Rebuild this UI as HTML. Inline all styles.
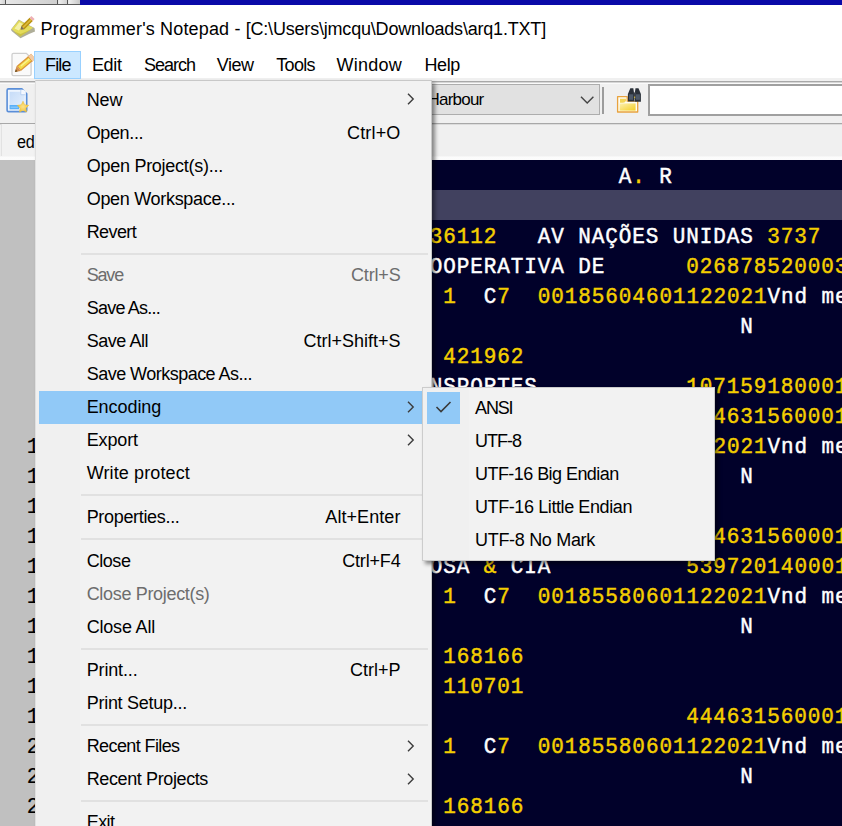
<!DOCTYPE html>
<html><head><meta charset="utf-8"><title>Programmer's Notepad</title>
<style>
html,body{margin:0;padding:0}
body{width:842px;height:826px;overflow:hidden;position:relative;background:#fff;font-family:"Liberation Sans",sans-serif}
.a{position:absolute}
.t{position:absolute;white-space:pre;line-height:1;font-family:"Liberation Sans",sans-serif}
.m{position:absolute;white-space:pre;font-family:"Liberation Mono",monospace;font-weight:normal;-webkit-text-stroke:0.45px;font-size:21px;line-height:30px;height:30px;color:#fff;letter-spacing:0.9px;transform:scaleY(1.07);transform-origin:0 20.6px}
.m i{font-style:normal;color:#f4cf00}
.ln{position:absolute;white-space:pre;font-family:"Liberation Mono",monospace;font-size:21px;line-height:30px;height:30px;color:#000;letter-spacing:0.9px;-webkit-text-stroke:0.15px;transform:scaleY(1.07);transform-origin:0 20.6px}
.sep{position:absolute;left:81px;width:347px;height:2px;background:#e1e1e1}
</style></head><body>

<div class="a" style="left:0;top:0;width:80px;height:4px;background:linear-gradient(90deg,#e9e9e9 0,#d2d2d2 5px,#e6e6e6 6px,#cfcfcf 57px,#ececec 59px,#d2d2d2 67px,#eeeeee 69px,#c8c8c8 80px)"></div>
<div class="a" style="left:5px;top:0;width:1px;height:4px;background:#555"></div>
<div class="a" style="left:57px;top:0;width:1px;height:4px;background:#555"></div>
<div class="a" style="left:67px;top:0;width:1px;height:4px;background:#555"></div>
<div class="a" style="left:0;top:4px;width:80px;height:1px;background:#5a5a5a"></div>
<div class="a" style="left:80px;top:0;width:762px;height:5px;background:#0a0aa8"></div>
<div class="a" style="left:0;top:78px;width:842px;height:82px;background:#f0f0f0"></div>
<div class="a" style="left:0;top:81px;width:842px;height:1px;background:#a8a8a8"></div>
<div class="a" style="left:0;top:82px;width:842px;height:1px;background:#d6d6d6"></div>
<div class="a" style="left:0;top:83px;width:842px;height:1px;background:#fafafa"></div>
<div class="a" style="left:0;top:123px;width:842px;height:1px;background:#a8a8a8"></div>
<div class="a" style="left:0;top:124px;width:842px;height:1px;background:#dcdcdc"></div>
<div class="a" style="left:300px;top:84px;width:300px;height:31px;background:#e1e1e1;border:1px solid #adadad;box-sizing:border-box"></div>
<div class="t" style="left:427.6px;top:91.4px;font-size:17px;color:#000;letter-spacing:-0.8px">Harbour</div>
<svg class="a" style="left:578px;top:93px" width="18" height="14" viewBox="0 0 18 14"><path d="M3 3.700 L9.200 10 L15.400 3.700" fill="none" stroke="#444" stroke-width="1.4"/></svg>
<div class="a" style="left:602px;top:87px;width:2px;height:27px;background:#9c9c9c"></div>
<svg class="a" style="left:612px;top:84px" width="34" height="34" viewBox="0 0 34 34">
<defs><linearGradient id="fg" x1="0" y1="0" x2="1" y2="1"><stop offset="0" stop-color="#fdf0b0"/><stop offset="1" stop-color="#f4cf25"/></linearGradient></defs>
<path d="M5.600 12.600 H15.200 V17.200 H25.700 V28 H5.600Z" fill="#fffdf2" stroke="#e8a23e" stroke-width="1.300" stroke-linejoin="round"/>
<path d="M8 14.800 h6 v2 q-.6 2 -3 2 h-3z" fill="#f3d456"/>
<rect x="7.600" y="19.400" width="16" height="7.200" fill="url(#fg)"/>
<path d="M18.300 4.200 h3 l.9 5.800 v7.500 h-6.300 v-7.500z" fill="#2a3039"/>
<path d="M23.500 4.200 h3 l2.400 5.800 v7.800 h-6.300 v-7.800z" fill="#2a3039"/>
<rect x="21.500" y="8.500" width="2.500" height="6" fill="#3a404a"/>
<rect x="17" y="10.300" width="4" height="5.500" fill="#70819a" opacity=".5"/>
<rect x="23.900" y="10.300" width="4" height="5.500" fill="#70819a" opacity=".5"/>
<rect x="22" y="12.500" width="1.200" height="1.800" fill="#c8b040"/>
</svg>
<div class="a" style="left:648px;top:84px;width:220px;height:32px;background:#fff;border:2px solid #a0a0a0;box-sizing:border-box"></div>
<svg class="a" style="left:2px;top:84px" width="34" height="34" viewBox="0 0 34 34">
<defs><linearGradient id="ng" x1="0" y1="0" x2="1" y2="1"><stop offset="0" stop-color="#c6dcf8"/><stop offset="1" stop-color="#e6f0fd"/></linearGradient>
<radialGradient id="sg" cx=".5" cy=".5" r=".6"><stop offset="0" stop-color="#fbe28c"/><stop offset="1" stop-color="#f2bf2c"/></radialGradient></defs>
<path d="M6.500 4.900 H19.800 L24.700 9.800 V26.200 Q24.700 27.600 23.300 27.600 H6.500 Q5.100 27.600 5.100 26.200 V6.300 Q5.100 4.900 6.500 4.900Z" fill="#eef5fe" stroke="#5a8ed8" stroke-width="1.600"/>
<rect x="7.600" y="7.800" width="15" height="18" fill="url(#ng)"/>
<path d="M18.500 5.800 L23.800 11 V7 L21 5.800Z" fill="#f4f8fe"/>
<path d="M18.800 6 V10.700 H23.600" fill="#f6f9ff" stroke="#a9c6ee" stroke-width=".7"/>
<rect x="7.600" y="21" width="9.500" height="4.200" fill="#5ab0f8"/>
<rect x="8.600" y="22.700" width="7.500" height=".9" fill="#9fd2fb"/>
<path d="M21 17.200 l1.750 3.600 l3.950 .55 l-2.850 2.800 l.67 3.950 l-3.520 -1.870 l-3.520 1.870 l.67 -3.950 l-2.850 -2.800 l3.950 -.55z" fill="url(#sg)" stroke="#eebc34" stroke-width=".5"/>
</svg>
<div class="a" style="left:1px;top:124px;width:60px;height:33px;background:#f2f2f2;border-left:1px solid #e2e2e2"></div>
<div class="a" style="left:0;top:156px;width:842px;height:4px;background:linear-gradient(#f4f4f4,#fcfcfc 40%,#fbfbfb)"></div>
<div class="t" style="left:16.9px;top:133.2px;font-size:18px;color:#000;letter-spacing:-0.3px;transform:scaleX(.9);transform-origin:0 0">ed</div>
<div class="a" style="left:0;top:160px;width:842px;height:666px;background:#01012a"></div>
<div class="a" style="left:0;top:160px;width:70px;height:666px;background:#c0c0c0"></div>
<div class="a" style="left:70px;top:190px;width:772px;height:30px;background:#41415f"></div>
<div class="m" style="left:618.80px;top:163.0px">A<i>.</i> R</div>
<div class="m" style="left:429.80px;top:223.0px"><i>36112</i>   AV NAÇÕES UNIDAS <i>3737</i></div>
<div class="m" style="left:429.80px;top:253.0px">OOPERATIVA DE      <i>026878520003</i></div>
<div class="m" style="left:443.30px;top:283.0px"><i>1</i>  C<i>7</i>  <i>00185604601122021</i>Vnd me</div>
<div class="m" style="left:740.30px;top:313.0px">N</div>
<div class="m" style="left:443.30px;top:343.0px"><i>421962</i></div>
<div class="m" style="left:429.80px;top:373.0px">NSPORTES           <i>107159180001</i></div>
<div class="m" style="left:686.30px;top:403.0px"><i>444631560001</i></div>
<div class="m" style="left:443.30px;top:433.0px"><i>1</i>  C<i>7</i>  <i>00185604601122021</i>Vnd me</div>
<div class="m" style="left:740.30px;top:463.0px">N</div>
<div class="m" style="left:686.30px;top:523.0px"><i>444631560001</i></div>
<div class="m" style="left:429.80px;top:553.0px">OSA <i>&amp;</i> CIA          <i>539720140001</i></div>
<div class="m" style="left:443.30px;top:583.0px"><i>1</i>  C<i>7</i>  <i>00185580601122021</i>Vnd me</div>
<div class="m" style="left:740.30px;top:613.0px">N</div>
<div class="m" style="left:443.30px;top:643.0px"><i>168166</i></div>
<div class="m" style="left:443.30px;top:673.0px"><i>110701</i></div>
<div class="m" style="left:686.30px;top:703.0px"><i>444631560001</i></div>
<div class="m" style="left:443.30px;top:733.0px"><i>1</i>  C<i>7</i>  <i>00185580601122021</i>Vnd me</div>
<div class="m" style="left:740.30px;top:763.0px">N</div>
<div class="m" style="left:443.30px;top:793.0px"><i>168166</i></div>
<div class="ln" style="left:26.7px;top:433.0px">10</div>
<div class="ln" style="left:26.7px;top:463.0px">11</div>
<div class="ln" style="left:26.7px;top:493.0px">12</div>
<div class="ln" style="left:26.7px;top:523.0px">13</div>
<div class="ln" style="left:26.7px;top:553.0px">14</div>
<div class="ln" style="left:26.7px;top:583.0px">15</div>
<div class="ln" style="left:26.7px;top:613.0px">16</div>
<div class="ln" style="left:26.7px;top:643.0px">17</div>
<div class="ln" style="left:26.7px;top:673.0px">18</div>
<div class="ln" style="left:26.7px;top:703.0px">19</div>
<div class="ln" style="left:26.7px;top:733.0px">20</div>
<div class="ln" style="left:26.7px;top:763.0px">21</div>
<div class="ln" style="left:26.7px;top:793.0px">22</div>
<svg class="a" style="left:9px;top:13px" width="28" height="28" viewBox="0 0 28 28">
<path d="M2 16.600 L9.800 6.600 L14 9 L25.500 15 L26 18.500 L20 21 L11.500 25.300 L2.600 18z" fill="#9b9a80" opacity=".8"/>
<path d="M2.600 16 L10 7.300 L24.200 14.800 L11.200 23.600z" fill="#e4dc5a"/>
<path d="M5.500 15.500 L10.300 9.200 L14.500 11.300 L9.800 17.600z" fill="#f6f3b0" opacity=".9"/>
<path d="M4.500 18.300 L11.200 23.600 L23 16 L11.600 21z" fill="#c9c046"/>
<path d="M15.400 16.200 L12.200 13 L20.600 4.700 L23.800 7.900z" fill="#b8900f"/>
<path d="M14.500 15.300 L13.300 14.100 L21.700 5.800 L22.900 7z" fill="#dcb838"/>
<path d="M23.800 7.900 L20.600 4.700 L22.400 2.900 L25.600 6.100z" fill="#eeb0b4"/>
<path d="M11.600 16.800 L15.400 16.200 L12.200 13z" fill="#7d6b5c"/>
</svg>
<svg class="a" style="left:6px;top:46px" width="34" height="34" viewBox="0 0 34 34">
<path d="M7.400 7.400 H20.400 L25.100 12 V28.200 Q25.100 29.600 23.700 29.600 H7.400 Q6 29.600 6 28.200 V8.800 Q6 7.400 7.400 7.400Z" fill="#fafafa" stroke="#cfcfcf" stroke-width="1.300"/>
<path d="M14.900 25.100 L10.600 20.100 L25.100 7.800 L29.400 12.800z" fill="#dc9436"/>
<path d="M14.700 23.600 L12.100 20.500 L23.400 10.900 L26 14z" fill="#f4dc48"/>
<path d="M15.400 20.600 L14.500 19.500 L22.800 12.400 L23.700 13.500z" fill="#fbf090"/>
<path d="M26.200 15.500 L22.100 10.600 L25.100 7.800 L29.400 12.800z" fill="#f3cba6"/>
<path d="M26.200 15.500 L22.100 10.600" stroke="#d89038" stroke-width=".8" fill="none"/>
<path d="M8.900 25.900 L14.900 25.100 L10.600 20.100z" fill="#d28c4a"/>
<path d="M8.900 25.900 L11.600 25.500 L9.900 23.300z" fill="#6e5020"/>
</svg>
<div class="a" style="left:33.5px;top:51px;width:47.5px;height:28px;background:#cce8ff;border:1px solid #99d1ff;box-sizing:border-box"></div>
<div class="a" style="left:34.5px;top:80px;width:397.5px;height:760px;background:#f2f2f2;border:1px solid #c8c8c8;border-left-color:#e0e0e0;box-sizing:border-box;box-shadow:3px 3px 4px rgba(0,0,0,.45)"></div>
<div class="a" style="left:36px;top:81px;width:44px;height:745px;background:#f0f0f0"></div>
<div class="a" style="left:39px;top:391px;width:383px;height:33px;background:#91c9f7"></div>
<div class="sep" style="top:253px"></div>
<div class="sep" style="top:494px"></div>
<div class="sep" style="top:538px"></div>
<div class="sep" style="top:648px"></div>
<div class="sep" style="top:724px"></div>
<div class="sep" style="top:800px"></div>
<svg class="a" style="left:405px;top:91px" width="12" height="16" viewBox="0 0 12 16"><path d="M3 2.800 L8.200 8 L3 13.200" fill="none" stroke="#3c3c3c" stroke-width="1.4"/></svg>
<svg class="a" style="left:405px;top:399px" width="12" height="16" viewBox="0 0 12 16"><path d="M3 2.800 L8.200 8 L3 13.200" fill="none" stroke="#3c3c3c" stroke-width="1.4"/></svg>
<svg class="a" style="left:405px;top:432px" width="12" height="16" viewBox="0 0 12 16"><path d="M3 2.800 L8.200 8 L3 13.200" fill="none" stroke="#3c3c3c" stroke-width="1.4"/></svg>
<svg class="a" style="left:405px;top:738px" width="12" height="16" viewBox="0 0 12 16"><path d="M3 2.800 L8.200 8 L3 13.200" fill="none" stroke="#3c3c3c" stroke-width="1.4"/></svg>
<svg class="a" style="left:405px;top:771px" width="12" height="16" viewBox="0 0 12 16"><path d="M3 2.800 L8.200 8 L3 13.200" fill="none" stroke="#3c3c3c" stroke-width="1.4"/></svg>
<div class="a" style="left:422px;top:387px;width:293px;height:174px;background:#f2f2f2;border:1px solid #cccccc;box-sizing:border-box;box-shadow:3px 3px 4px rgba(0,0,0,.45)"></div>
<div class="a" style="left:423px;top:388px;width:46px;height:172px;background:#f0f0f0"></div>
<div class="a" style="left:426.5px;top:391.5px;width:33px;height:32.5px;background:#91c9f7"></div>
<svg class="a" style="left:433px;top:398px" width="22" height="18" viewBox="0 0 22 18"><path d="M3.500 9 L8 13.500 L17.500 4" fill="none" stroke="#3a3a3a" stroke-width="1.6"/></svg>
<div class="t" style="left:40.6px;top:19.76px;font-size:18px;color:#000;letter-spacing:0.156px">Programmer&#x27;s Notepad - </div>
<div class="t" style="left:245.7px;top:19.76px;font-size:18px;color:#000;letter-spacing:-0.195px">[C:\Users\jmcqu\Downloads\arq1.TXT]</div>
<div class="t" style="left:45.0px;top:56.06px;font-size:18px;color:#000;letter-spacing:-0.829px">File</div>
<div class="t" style="left:91.9px;top:56.06px;font-size:18px;color:#000;letter-spacing:-0.283px">Edit</div>
<div class="t" style="left:144.0px;top:56.06px;font-size:18px;color:#000;letter-spacing:-1.008px">Search</div>
<div class="t" style="left:216.8px;top:56.06px;font-size:18px;color:#000;letter-spacing:-0.526px">View</div>
<div class="t" style="left:276.2px;top:56.06px;font-size:18px;color:#000;letter-spacing:-0.646px">Tools</div>
<div class="t" style="left:336.5px;top:56.06px;font-size:18px;color:#000;letter-spacing:0.245px">Window</div>
<div class="t" style="left:424.4px;top:56.06px;font-size:18px;color:#000;letter-spacing:-0.358px">Help</div>
<div class="t" style="left:86.7px;top:90.76px;font-size:18px;color:#000;letter-spacing:-0.072px">New</div>
<div class="t" style="left:86.7px;top:123.76px;font-size:18px;color:#000;letter-spacing:-0.364px">Open...</div>
<div class="t" style="left:347.0px;top:123.76px;font-size:18px;color:#000;letter-spacing:0.164px">Ctrl+O</div>
<div class="t" style="left:86.7px;top:156.76px;font-size:18px;color:#000;letter-spacing:-0.264px">Open Project(s)...</div>
<div class="t" style="left:86.7px;top:189.76px;font-size:18px;color:#000;letter-spacing:-0.303px">Open Workspace...</div>
<div class="t" style="left:86.7px;top:222.76px;font-size:18px;color:#000;letter-spacing:-0.586px">Revert</div>
<div class="t" style="left:86.7px;top:265.76px;font-size:18px;color:#6d6d6d;letter-spacing:-1.183px">Save</div>
<div class="t" style="left:351.0px;top:265.76px;font-size:18px;color:#6d6d6d;letter-spacing:-0.169px">Ctrl+S</div>
<div class="t" style="left:86.7px;top:298.76px;font-size:18px;color:#000;letter-spacing:-0.775px">Save As...</div>
<div class="t" style="left:86.7px;top:331.76px;font-size:18px;color:#000;letter-spacing:-0.468px">Save All</div>
<div class="t" style="left:303.5px;top:331.76px;font-size:18px;color:#000;letter-spacing:-0.004px">Ctrl+Shift+S</div>
<div class="t" style="left:86.7px;top:364.76px;font-size:18px;color:#000;letter-spacing:-0.522px">Save Workspace As...</div>
<div class="t" style="left:86.7px;top:397.76px;font-size:18px;color:#000;letter-spacing:-0.070px">Encoding</div>
<div class="t" style="left:86.7px;top:430.76px;font-size:18px;color:#000;letter-spacing:-0.122px">Export</div>
<div class="t" style="left:86.7px;top:463.76px;font-size:18px;color:#000;letter-spacing:0.123px">Write protect</div>
<div class="t" style="left:86.7px;top:507.76px;font-size:18px;color:#000;letter-spacing:-0.327px">Properties...</div>
<div class="t" style="left:325.3px;top:507.76px;font-size:18px;color:#000;letter-spacing:0.073px">Alt+Enter</div>
<div class="t" style="left:86.7px;top:551.76px;font-size:18px;color:#000;letter-spacing:-0.446px">Close</div>
<div class="t" style="left:342.2px;top:551.76px;font-size:18px;color:#000;letter-spacing:-0.174px">Ctrl+F4</div>
<div class="t" style="left:86.7px;top:584.76px;font-size:18px;color:#6d6d6d;letter-spacing:-0.327px">Close Project(s)</div>
<div class="t" style="left:86.7px;top:617.76px;font-size:18px;color:#000;letter-spacing:-0.192px">Close All</div>
<div class="t" style="left:86.7px;top:660.76px;font-size:18px;color:#000;letter-spacing:-0.152px">Print...</div>
<div class="t" style="left:350.0px;top:660.76px;font-size:18px;color:#000;letter-spacing:-0.003px">Ctrl+P</div>
<div class="t" style="left:86.7px;top:693.76px;font-size:18px;color:#000;letter-spacing:-0.269px">Print Setup...</div>
<div class="t" style="left:86.7px;top:736.76px;font-size:18px;color:#000;letter-spacing:-0.604px">Recent Files</div>
<div class="t" style="left:86.7px;top:769.76px;font-size:18px;color:#000;letter-spacing:-0.384px">Recent Projects</div>
<div class="t" style="left:86.7px;top:812.76px;font-size:18px;color:#000;letter-spacing:-0.554px">Exit</div>
<div class="t" style="left:475.0px;top:398.86px;font-size:18px;color:#000;letter-spacing:-1.129px">ANSI</div>
<div class="t" style="left:475.0px;top:431.86px;font-size:18px;color:#000;letter-spacing:-1.000px">UTF-8</div>
<div class="t" style="left:475.0px;top:464.86px;font-size:18px;color:#000;letter-spacing:-0.552px">UTF-16 Big Endian</div>
<div class="t" style="left:475.0px;top:497.86px;font-size:18px;color:#000;letter-spacing:-0.404px">UTF-16 Little Endian</div>
<div class="t" style="left:475.0px;top:530.86px;font-size:18px;color:#000;letter-spacing:-0.309px">UTF-8 No Mark</div>
</body></html>
